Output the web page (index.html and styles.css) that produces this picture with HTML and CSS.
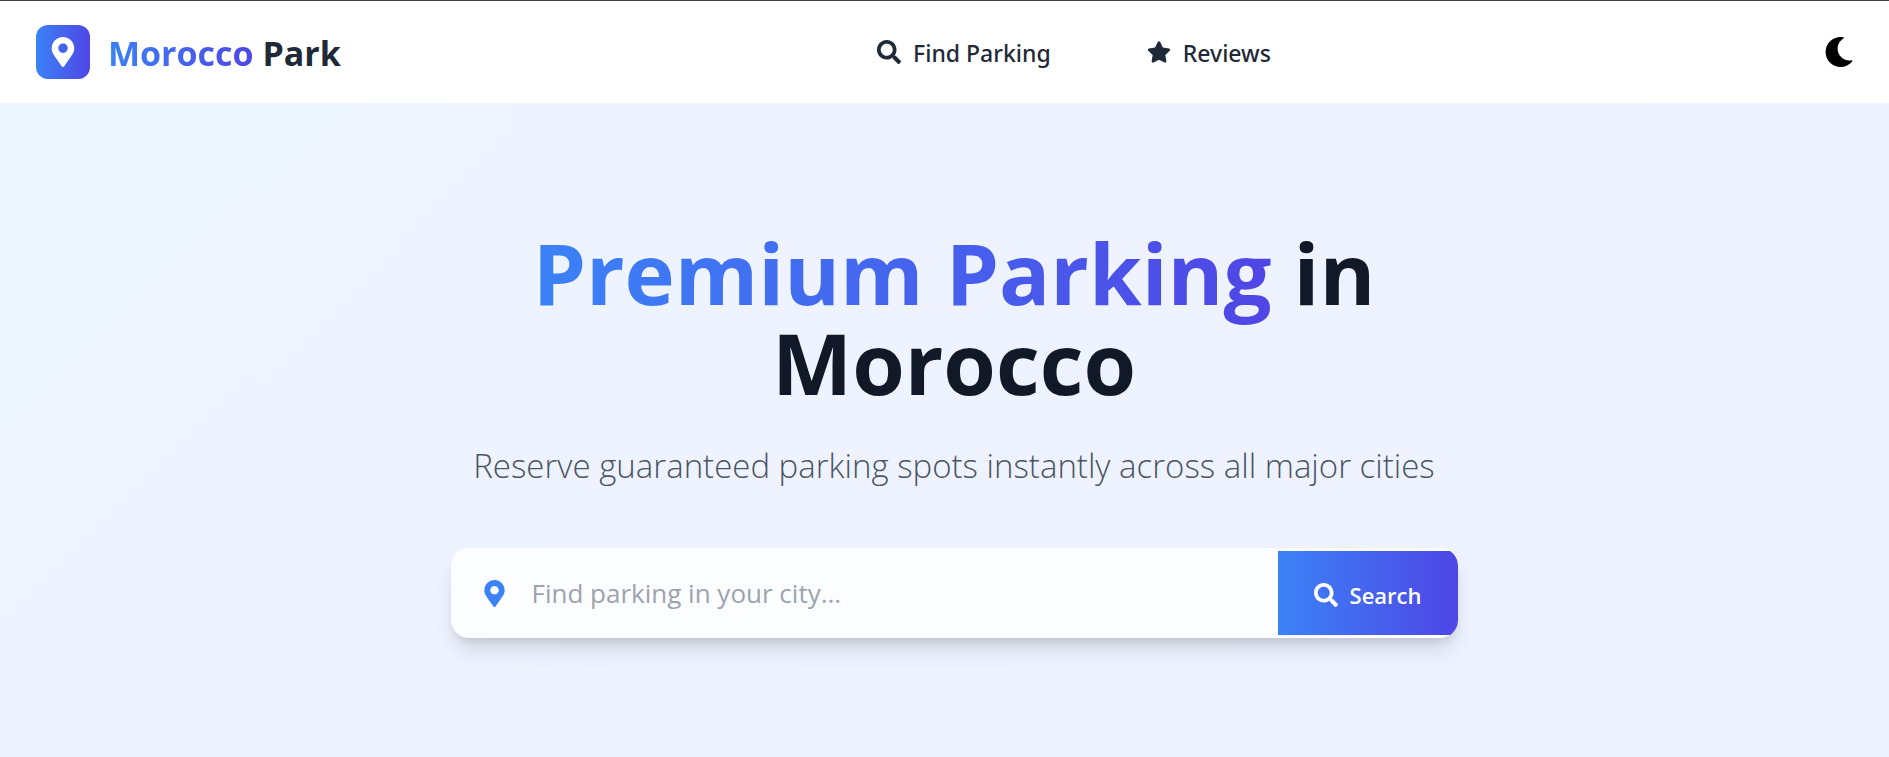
FILE: index.html
```html
<!DOCTYPE html>
<html lang="en">
<head>
<meta charset="utf-8">
<title>Morocco Park</title>
<meta name="viewport" content="width=device-width, initial-scale=1">
<link rel="stylesheet" href="styles.css">
</head>
<body>
<header class="topbar">
  <a class="brand" href="#">
    <span class="brand-mark">
      <svg class="icon-lg" viewBox="0 0 384 512" aria-hidden="true"><path d="M172.268 501.67C26.97 291.031 0 269.413 0 192 0 85.961 85.961 0 192 0s192 85.961 192 192c0 77.413-26.97 99.031-172.268 309.67-9.535 13.774-29.93 13.773-39.464 0zM192 272c44.183 0 80-35.817 80-80s-35.817-80-80-80-80 35.817-80 80 35.817 80 80 80z"/></svg>
    </span>
    <span class="brand-name"><span class="gradient-text">Morocco</span> Park</span>
  </a>
  <nav class="links" aria-label="Main">
    <a class="link" href="#find">
      <svg class="icon" viewBox="0 0 512 512" aria-hidden="true"><path d="M505 442.7L405.3 343c-4.5-4.5-10.6-7-17-7H372c27.6-35.3 44-79.7 44-128C416 93.1 322.9 0 208 0S0 93.1 0 208s93.1 208 208 208c48.3 0 92.7-16.4 128-44v16.3c0 6.4 2.5 12.5 7 17l99.7 99.7c9.4 9.4 24.6 9.4 33.9 0l28.3-28.3c9.4-9.4 9.4-24.6.1-34zM208 336c-70.7 0-128-57.2-128-128 0-70.7 57.2-128 128-128 70.7 0 128 57.2 128 128 0 70.7-57.2 128-128 128z"/></svg>
      <span class="label">Find Parking</span>
    </a>
    <a class="link" href="#reviews">
      <svg class="icon" viewBox="0 0 576 512" aria-hidden="true"><path d="M259.3 17.8L194 150.2 47.9 171.5c-26.2 3.8-36.7 36.1-17.7 54.6l105.7 103-25 145.5c-4.5 26.3 23.2 46 46.4 33.7L288 439.6l130.7 68.7c23.2 12.2 50.9-7.4 46.4-33.7l-25-145.5 105.7-103c19-18.5 8.5-50.8-17.7-54.6L382 150.2 316.7 17.8c-11.7-23.6-45.6-23.9-57.4 0z"/></svg>
      <span class="label">Reviews</span>
    </a>
  </nav>
  <button class="theme" type="button" aria-label="Switch to dark theme">
    <svg class="icon-lg" viewBox="0 0 512 512" aria-hidden="true"><path d="M283.211 512c78.962 0 151.079-35.925 198.857-94.792 7.068-8.708-.639-21.43-11.562-19.35-124.203 23.654-238.262-71.576-238.262-196.954 0-72.222 38.662-138.635 101.498-174.394 9.686-5.512 7.25-20.197-3.756-22.23A258.156 258.156 0 0 0 283.211 0c-141.309 0-256 114.511-256 256 0 141.309 114.511 256 256 256z"/></svg>
  </button>
</header>
<main class="hero">
  <h1 class="title"><span class="gradient-text">Premium Parking</span> in Morocco</h1>
  <p class="subtitle">Reserve guaranteed parking spots instantly across all major cities</p>
  <form class="search" role="search">
    <label class="field">
      <svg class="pin" viewBox="0 0 384 512" aria-hidden="true"><path d="M172.268 501.67C26.97 291.031 0 269.413 0 192 0 85.961 85.961 0 192 0s192 85.961 192 192c0 77.413-26.97 99.031-172.268 309.67-9.535 13.774-29.93 13.773-39.464 0zM192 272c44.183 0 80-35.817 80-80s-35.817-80-80-80-80 35.817-80 80 35.817 80 80 80z"/></svg>
      <input class="input" type="text" placeholder="Find parking in your city..." aria-label="City">
    </label>
    <button class="submit" type="submit">
      <svg class="icon" viewBox="0 0 512 512" aria-hidden="true"><path d="M505 442.7L405.3 343c-4.5-4.5-10.6-7-17-7H372c27.6-35.3 44-79.7 44-128C416 93.1 322.9 0 208 0S0 93.1 0 208s93.1 208 208 208c48.3 0 92.7-16.4 128-44v16.3c0 6.4 2.5 12.5 7 17l99.7 99.7c9.4 9.4 24.6 9.4 33.9 0l28.3-28.3c9.4-9.4 9.4-24.6.1-34zM208 336c-70.7 0-128-57.2-128-128 0-70.7 57.2-128 128-128 70.7 0 128 57.2 128 128 0 70.7-57.2 128-128 128z"/></svg>
      <span>Search</span>
    </button>
  </form>
</main>
</body>
</html>
```
FILE: styles.css
```css
* { box-sizing: border-box; }

body {
  margin: 0;
  min-height: 100vh;
  display: flex;
  flex-direction: column;
  font-family: "Segoe UI", "Open Sans", "Noto Sans", sans-serif;
  color: #1f2937;
  border-top: 1px solid #3f3f46;
}

svg { fill: currentColor; flex: none; }
a { color: inherit; text-decoration: none; }
button { border: 0; font: inherit; cursor: pointer; }

.icon { width: 24px; height: 24px; }
.icon-lg { width: 30px; height: 30px; }

.gradient-text {
  background: linear-gradient(90deg, #3b82f6, #4f46e5);
  background-clip: text;
  -webkit-background-clip: text;
  color: transparent;
}

.topbar {
  display: flex;
  align-items: center;
  justify-content: space-between;
  padding: 24px 18px 24px 36px;
  background: #fff;
}

.brand { display: flex; align-items: center; gap: 18px; }

.brand-mark {
  width: 54px;
  height: 54px;
  display: grid;
  place-items: center;
  border-radius: 12px;
  color: #fff;
  background: linear-gradient(90deg, #3b82f6, #4f46e5);
}

.brand-name {
  padding-top: 3px;
  font-size: 34px;
  line-height: 51px;
  font-weight: 700;
}

.links { display: flex; gap: 96px; }

.link {
  display: flex;
  align-items: center;
  gap: 12px;
  font-family: "Segoe UI", "Noto Sans", "Open Sans", sans-serif;
  font-size: 23px;
  line-height: 36px;
  font-weight: 500;
}

.label { padding-top: 2px; }

.theme {
  display: flex;
  padding: 12px 17px;
  background: none;
  color: #000;
}

.hero {
  flex: 1;
  display: flex;
  flex-direction: column;
  align-items: center;
  padding: 124px 0 96px 19px;
  background: linear-gradient(135deg, #edf6ff, #eef3ff 40%, #eef2ff);
}

.title {
  max-width: 1008px;
  margin: 0 0 32px;
  font-size: 85px;
  line-height: 90px;
  font-weight: 700;
  text-align: center;
  color: #111827;
}

.subtitle {
  margin: 0 0 55px;
  font-size: 33px;
  line-height: 54px;
  font-weight: 300;
  color: #4b5563;
}

.search {
  width: 100%;
  max-width: 1007px;
  display: flex;
  padding: 3px 0;
  border-radius: 18px;
  overflow: hidden;
  background: #fcfdff;
  box-shadow: 0 15px 22px -4px rgba(0, 0, 0, .12), 0 6px 9px -3px rgba(0, 0, 0, .1);
}

.field {
  flex: 1;
  display: flex;
  align-items: center;
  gap: 24px;
  padding-left: 30px;
}

.pin { width: 27px; height: 27px; color: #3b82f6; }

.input {
  flex: 1;
  min-width: 0;
  height: 84px;
  padding: 0;
  border: 0;
  outline: 0;
  background: none;
  font: inherit;
  font-size: 26px;
  color: #1f2937;
}

.input::placeholder { color: #9ca3af; opacity: 1; }

.submit {
  display: flex;
  align-items: center;
  gap: 12px;
  padding: 3px 36px 0;
  font-size: 22px;
  font-weight: 600;
  color: #fff;
  background: linear-gradient(90deg, #3b82f6, #4f46e5);
}
```
